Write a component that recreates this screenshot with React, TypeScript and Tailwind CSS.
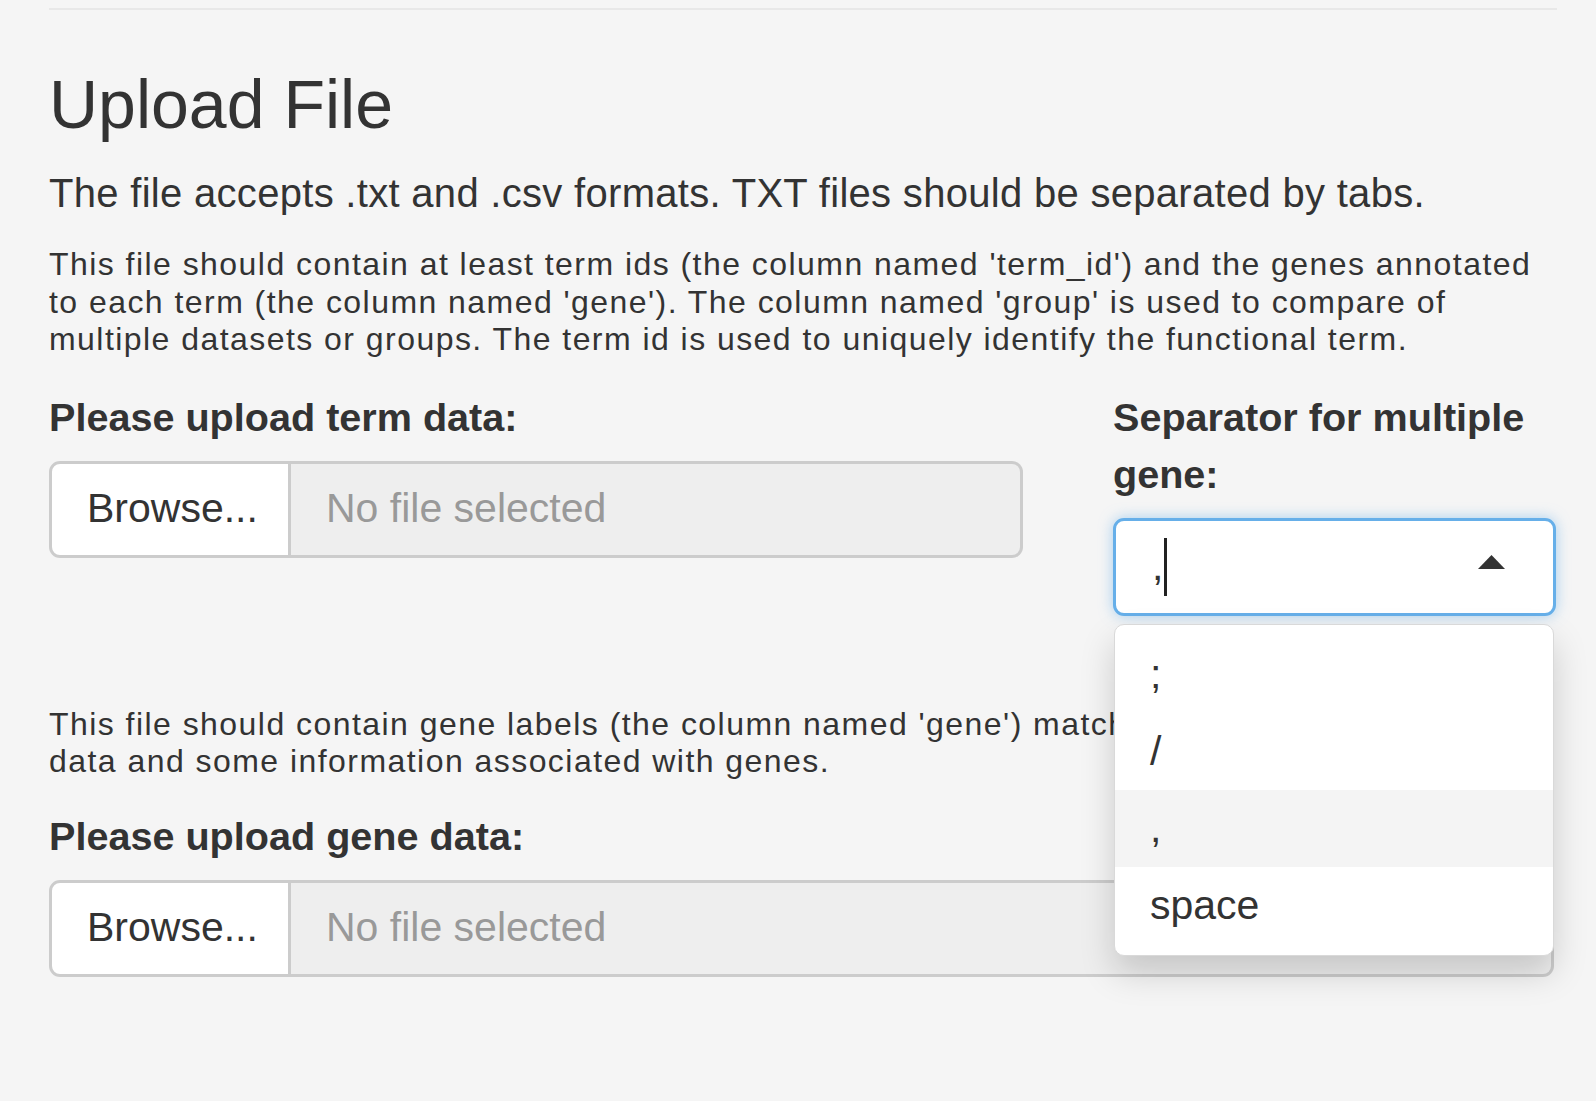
function FileField({ width }: { width: string }) {
  return (
    <div className={`flex h-[97px] ${width}`}>
      <div className="flex items-center h-full w-[242px] shrink-0 bg-white border-[3px] border-[#cccccc] rounded-l-[11px] pl-[35px] text-[41px] text-[#333]">
        Browse...
      </div>
      <div className="flex items-center h-full flex-1 bg-[#eeeeee] border-[3px] border-l-0 border-[#cccccc] rounded-r-[11px] pl-[35px] text-[41px] text-[#999999]">
        No file selected
      </div>
    </div>
  );
}

const options = [";", "/", ",", "space"];

export default function App() {
  return (
    <div className="min-h-screen w-full bg-[#f5f5f5] text-[#333333] font-['Liberation_Sans',Arial,sans-serif]">
      <div className="pl-[49px] pt-[8px] w-[1557px]">
        <div className="border-t-[2px] border-[#e8e8e8]" />

        <h3 className="mt-[56px] text-[68px] leading-[76px] font-normal">Upload File</h3>

        <p className="mt-[23px] text-[40px] leading-[57px] tracking-[0.3px]">
          The file accepts .txt and .csv formats. TXT files should be separated by tabs.
        </p>

        <p className="mt-[24px] text-[32px] leading-[37.5px] tracking-[1.45px] whitespace-nowrap">
          This file should contain at least term ids (the column named 'term_id') and the genes annotated
          <br />
          to each term (the column named 'gene'). The column named 'group' is used to compare of
          <br />
          multiple datasets or groups. The term id is used to uniquely identify the functional term.
        </p>

        <div className="mt-[30px] flex gap-[90px]">
          <div className="w-[974px]">
            <label className="block text-[39.6px] leading-[57px] font-bold">Please upload term data:</label>
            <div className="mt-[15px]">
              <FileField width="w-full" />
            </div>
          </div>

          <div className="w-[443px] relative z-10">
            <label className="block text-[39.6px] leading-[57px] font-bold">
              Separator for multiple
              <br />
              gene:
            </label>
            <div className="relative mt-[15px]">
              <div className="flex items-center justify-between h-[98px] bg-white border-[3px] border-[#66afe9] rounded-[11px] shadow-[0_0_14px_rgba(102,175,233,0.55)] pl-[36px] pr-[48px]">
                <div className="flex items-center text-[41px]">
                  <span>,</span>
                  <span className="ml-[1px] w-[3px] h-[58px] bg-[#222]" />
                </div>
                <svg width="27" height="14" viewBox="0 0 27 14" className="-mt-[9px]">
                  <polygon points="13.5,0 27,14 0,14" fill="#333" />
                </svg>
              </div>

              <div className="absolute left-[1px] top-[calc(100%+8px)] w-[440px] bg-white border border-[#d9d9d9] rounded-[10px] py-[11px] shadow-[0_17px_34px_rgba(0,0,0,0.17)]">
                {options.map((o) => (
                  <div
                    key={o}
                    className={`h-[77px] leading-[77px] pl-[35px] text-[41px] ${o === "," ? "bg-[#f4f4f4]" : ""}`}
                  >
                    {o}
                  </div>
                ))}
              </div>
            </div>
          </div>
        </div>

        <p className="mt-[90px] text-[32px] leading-[37.5px] tracking-[1.45px] whitespace-nowrap">
          This file should contain gene labels (the column named 'gene') matching the genes in the term
          <br />
          data and some information associated with genes.
        </p>

        <label className="block mt-[27px] text-[39.6px] leading-[57px] font-bold">Please upload gene data:</label>
        <div className="mt-[15px]">
          <FileField width="w-[1505px]" />
        </div>
      </div>
    </div>
  );
}
